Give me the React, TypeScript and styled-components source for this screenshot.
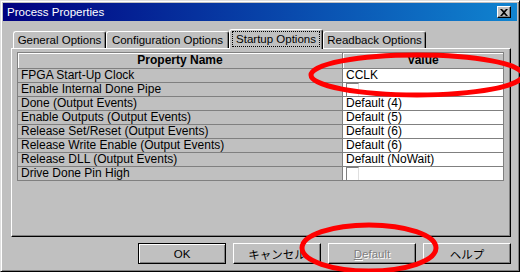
import { Fragment } from "react";
import styled, { createGlobalStyle } from "styled-components";

const GlobalStyle = createGlobalStyle`
  html, body {
    margin: 0;
    padding: 0;
    background: #c0c0c0;
    overflow: hidden;
  }
`;

const UI_FONT = `"Liberation Sans", "Noto Sans CJK JP", sans-serif`;

type Row = { name: string; value?: string; check?: boolean };

const rows: Row[] = [
  { name: "FPGA Start-Up Clock", value: "CCLK" },
  { name: "Enable Internal Done Pipe", check: true },
  { name: "Done (Output Events)", value: "Default (4)" },
  { name: "Enable Outputs (Output Events)", value: "Default (5)" },
  { name: "Release Set/Reset (Output Events)", value: "Default (6)" },
  { name: "Release Write Enable (Output Events)", value: "Default (6)" },
  { name: "Release DLL (Output Events)", value: "Default (NoWait)" },
  { name: "Drive Done Pin High", check: true },
];

const tabs = [
  { label: "General Options", w: 93 },
  { label: "Configuration Options", w: 123 },
  { label: "Startup Options", w: 94, active: true },
  { label: "Readback Options", w: 103 },
];

const App: React.FC = () => {
  return (
    <>
      <GlobalStyle />
      <Dialog>
        <TitleBar>
          <Title>Process Properties</Title>
          <CloseButton>
            <svg width="8" height="7" viewBox="0 0 8 7">
              <path d="M0 0h2l2 2 2-2h2L5 3.5 8 7H6L4 5 2 7H0l3-3.5z" fill="#000" />
            </svg>
          </CloseButton>
        </TitleBar>

        <Body>
          <TabRow>
            {tabs.map((t) => (
              <Tab key={t.label} $w={t.w} $active={!!t.active}>
                <TabLabel $active={!!t.active}>{t.label}</TabLabel>
              </Tab>
            ))}
          </TabRow>

          <Panel>
            <Grid>
              <HeadCell>Property Name</HeadCell>
              <HeadCell>Value</HeadCell>
              {rows.map((r) => (
                <Fragment key={r.name}>
                  <NameCell>{r.name}</NameCell>
                  <ValueCell>{r.check ? <CheckBox /> : r.value}</ValueCell>
                </Fragment>
              ))}
            </Grid>
          </Panel>

          <ButtonRow>
            <Button $primary>OK</Button>
            <Button>キャンセル</Button>
            <Button $disabled>
              <u>D</u>efault
            </Button>
            <Button>ヘルプ</Button>
          </ButtonRow>
        </Body>

        <Marks width="520" height="272" viewBox="0 0 520 272">
          <ellipse cx="416" cy="74" rx="106" ry="20" fill="none" stroke="#ff0000" strokeWidth="5" />
          <ellipse cx="368" cy="247" rx="67" ry="23" fill="none" stroke="#ff0000" strokeWidth="5" />
        </Marks>
      </Dialog>
    </>
  );
};

export default App;

const Dialog = styled.div`
  position: relative;
  width: 520px;
  height: 272px;
  box-sizing: border-box;
  background: #c0c0c0;
  border-top: 1px solid #dfdfdf;
  border-left: 1px solid #dfdfdf;
  border-right: 1px solid #000;
  border-bottom: 1px solid #000;
  box-shadow: inset 1px 1px #fff, inset -1px -1px #808080;
  padding: 2px;
  display: flex;
  flex-direction: column;
  font-family: ${UI_FONT};
  font-size: 11.5px;
  color: #000;
`;

const TitleBar = styled.div`
  height: 18px;
  flex: none;
  display: flex;
  align-items: center;
  justify-content: space-between;
  padding: 0 6px 0 4px;
  background: linear-gradient(90deg, #000080, #1084d0);
`;

const Title = styled.div`
  color: #fff;
  font-size: 11.5px;
`;

const CloseButton = styled.div`
  width: 14px;
  height: 12px;
  box-sizing: border-box;
  background: #c0c0c0;
  border-top: 1px solid #fff;
  border-left: 1px solid #fff;
  border-right: 1px solid #000;
  border-bottom: 1px solid #000;
  box-shadow: inset -1px -1px #808080;
  display: flex;
  align-items: center;
  justify-content: center;
`;

const Body = styled.div`
  flex: 1;
  display: flex;
  flex-direction: column;
  padding: 8px 6px 0 8px;
`;

const TabRow = styled.div`
  height: 19px;
  display: flex;
  align-items: flex-end;
  padding-left: 2px;
`;

const Tab = styled.div<{ $w: number; $active: boolean }>`
  position: relative;
  z-index: ${(p) => (p.$active ? 1 : 0)};
  width: ${(p) => p.$w}px;
  height: ${(p) => (p.$active ? 20 : 17)}px;
  margin-bottom: ${(p) => (p.$active ? -1 : 0)}px;
  box-sizing: border-box;
  background: #c0c0c0;
  border-top: 1px solid #fff;
  border-left: 1px solid #fff;
  border-right: 1px solid #000;
  border-radius: 3px 3px 0 0;
  box-shadow: inset -1px 0 #808080;
  display: flex;
  align-items: center;
  justify-content: center;
  padding: ${(p) => (p.$active ? "1px 2px 2px" : "0")};
  white-space: nowrap;
`;

const TabLabel = styled.span<{ $active: boolean }>`
  flex: ${(p) => (p.$active ? 1 : "none")};
  align-self: stretch;
  display: flex;
  align-items: center;
  justify-content: center;
  border: 1px dotted ${(p) => (p.$active ? "#000" : "transparent")};
`;

const Panel = styled.div`
  width: 500px;
  height: 189px;
  box-sizing: border-box;
  border-top: 1px solid #fff;
  border-left: 1px solid #fff;
  border-right: 1px solid #000;
  border-bottom: 1px solid #000;
  box-shadow: inset -1px -1px #808080;
  padding: 3px 0 0 5px;
`;

const Grid = styled.div`
  display: grid;
  grid-template-columns: 325px 161px;
  width: max-content;
  border-top: 1px solid #808080;
  border-left: 1px solid #808080;
  font-size: 12px;
`;

const HeadCell = styled.div`
  height: 16px;
  box-sizing: border-box;
  border-right: 1px solid #808080;
  border-bottom: 1px solid #808080;
  box-shadow: inset 1px 1px #fff;
  font-weight: bold;
  text-align: center;
  line-height: 15px;
`;

const NameCell = styled.div`
  height: 14px;
  box-sizing: border-box;
  border-right: 1px solid #808080;
  border-bottom: 1px solid #808080;
  padding-left: 3px;
  line-height: 13px;
  white-space: nowrap;
  overflow: hidden;
`;

const ValueCell = styled(NameCell)`
  background: #fff;
`;

const CheckBox = styled.span`
  display: block;
  width: 13px;
  height: 14px;
  box-sizing: border-box;
  background: #fff;
  border-top: 1px solid #808080;
  border-left: 1px solid #808080;
  border-right: 1px solid #dfdfdf;
`;

const ButtonRow = styled.div`
  display: flex;
  justify-content: flex-end;
  gap: 7px;
  margin-top: 6px;
`;

const Button = styled.div<{ $primary?: boolean; $disabled?: boolean }>`
  width: 88px;
  height: 21px;
  box-sizing: border-box;
  background: #c0c0c0;
  border: 1px solid;
  border-color: ${(p) => (p.$primary ? "#000" : "#fff #000 #000 #fff")};
  box-shadow: ${(p) =>
    p.$primary ? "inset 1px 1px #fff, inset -1px -1px #808080" : "inset -1px -1px #808080"};
  display: flex;
  align-items: center;
  justify-content: center;
  font-size: 11.5px;
  color: ${(p) => (p.$disabled ? "#808080" : "#000")};
  text-shadow: ${(p) => (p.$disabled ? "1px 1px #fff" : "none")};
`;

const Marks = styled.svg`
  position: absolute;
  top: 0;
  left: 0;
  pointer-events: none;
`;
